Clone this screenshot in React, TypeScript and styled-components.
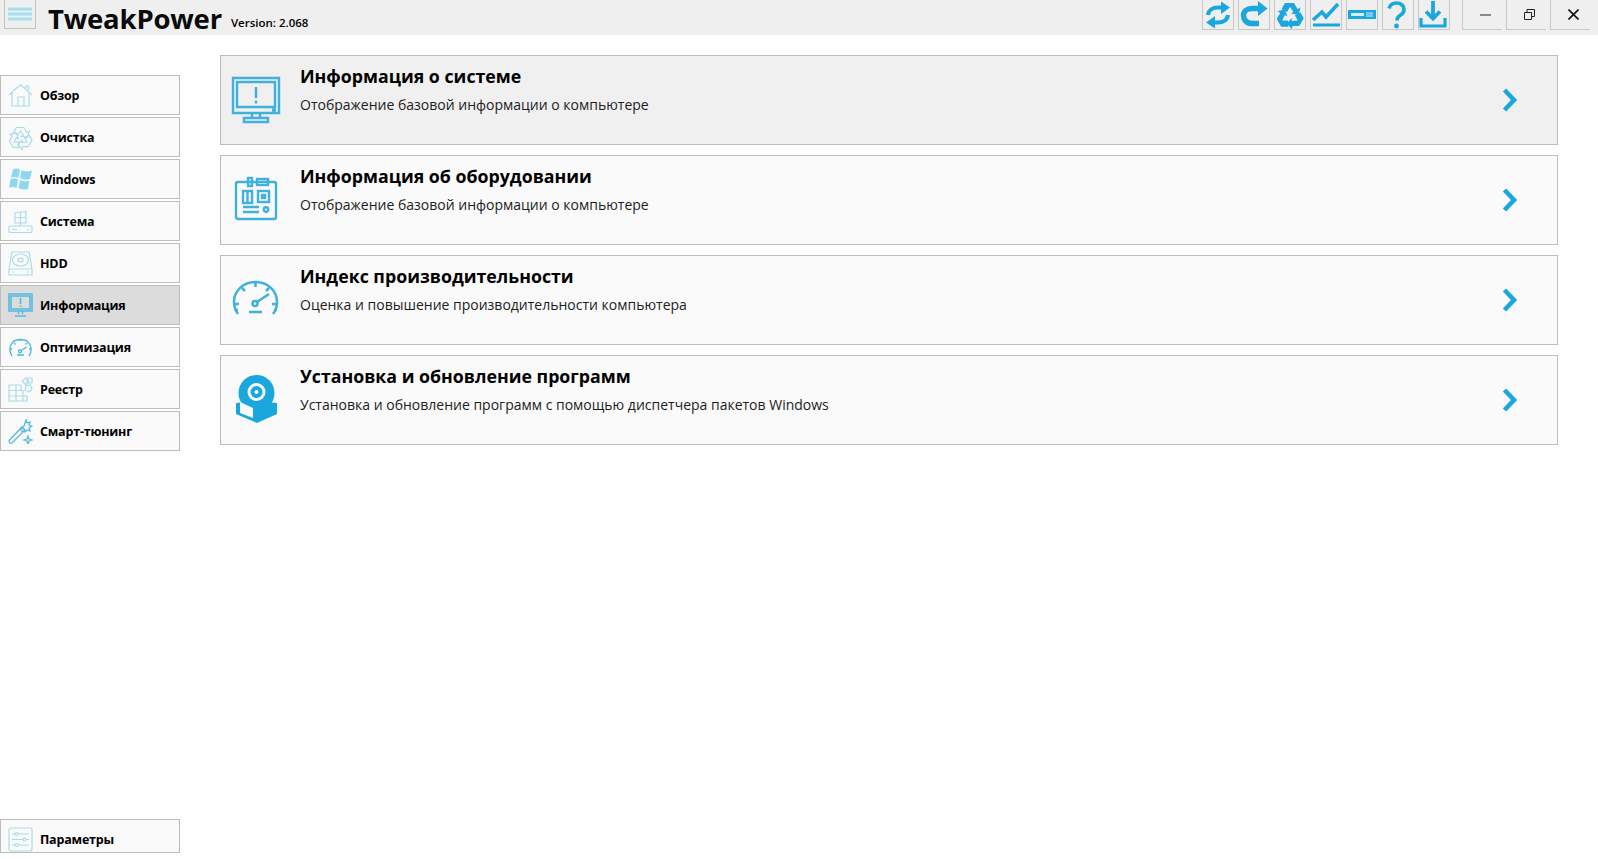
import * as React from 'react';
import styled, { createGlobalStyle } from 'styled-components';

const GlobalStyle = createGlobalStyle`
  html, body {
    margin: 0;
    padding: 0;
    background: #ffffff;
    font-family: 'Open Sans', 'Noto Sans', sans-serif;
    color: #000;
    overflow: hidden;
  }
  * { box-sizing: border-box; }
`;

const Page = styled.div`
  width: 1598px;
  height: 859px;
  display: flex;
  flex-direction: column;
`;

const Header = styled.header`
  height: 35px;
  flex-shrink: 0;
  background: #efefef;
  display: flex;
  align-items: flex-start;
  padding-left: 4px;
`;

const MenuButton = styled.div`
  width: 32px;
  height: 29px;
  border: 1px solid #c4c4c4;
  border-top: none;
  display: flex;
  align-items: center;
  justify-content: center;
`;

const AppTitle = styled.div`
  margin-left: 12px;
  font-size: 27.5px;
  line-height: 38px;
  font-weight: 700;
  letter-spacing: -0.2px;
  color: #0a0a0a;
`;

const Version = styled.div`
  margin-left: 9px;
  margin-top: 14px;
  font-size: 11.5px;
  line-height: 17px;
  font-weight: 600;
`;

const HeaderSpacer = styled.div`
  flex: 1;
`;

const ToolGroup = styled.div`
  display: flex;
  gap: 4px;
  margin-right: 12px;
`;

const ToolButton = styled.div`
  width: 32px;
  height: 30px;
  border: 1px solid #c8c8c8;
  border-top: none;
  display: flex;
  align-items: center;
  justify-content: center;
  color: #1aa7de;
`;

const WindowGroup = styled.div`
  display: flex;
  gap: 4px;
  margin-right: 8px;
`;

const WindowButton = styled.div`
  width: 40px;
  height: 30px;
  padding-left: 5px;
  border: 1px solid #c8c8c8;
  border-top: none;
  border-right: none;
  display: flex;
  align-items: center;
  justify-content: center;
`;

const Body = styled.div`
  flex: 1;
  display: flex;
  min-height: 0;
`;

const Sidebar = styled.nav`
  width: 180px;
  flex-shrink: 0;
  padding: 40px 0 6px;
  display: flex;
  flex-direction: column;
  justify-content: space-between;
`;

const NavList = styled.div`
  display: flex;
  flex-direction: column;
  gap: 2px;
`;

const NavItem = styled.div<{ $active?: boolean; $short?: boolean }>`
  height: ${(p) => (p.$short ? 34 : 40)}px;
  padding-top: ${(p) => (p.$short ? 6 : 0)}px;
  border: 1px solid #bdbdbd;
  background: ${(p) => (p.$active ? '#dcdcdc' : '#fafafa')};
  display: flex;
  align-items: center;
  padding-left: 7px;
  gap: 7px;
  font-size: 12.5px;
  font-weight: 700;
  letter-spacing: -0.2px;
`;

const NavIconBox = styled.div<{ $active?: boolean }>`
  width: 25px;
  height: 25px;
  color: ${(p) => (p.$active ? '#4fb8dd' : '#a9dcec')};
  display: flex;
  svg { width: 25px; height: 25px; display: block; }
`;

const Main = styled.main`
  flex: 1;
  padding: 20px 40px 0;
  display: flex;
  flex-direction: column;
  gap: 10px;
`;

const Card = styled.div<{ $active?: boolean }>`
  height: 90px;
  border: 1px solid #bdbdbd;
  background: ${(p) => (p.$active ? '#f0f0f0' : '#fafafa')};
  display: flex;
  align-items: flex-start;
`;

const CardIcon = styled.div`
  width: 50px;
  height: 50px;
  margin: 19px 0 0 10px;
  color: #3fb1dc;
  flex-shrink: 0;
  svg { width: 50px; height: 50px; display: block; }
`;

const CardText = styled.div`
  flex: 1;
  padding: 8px 0 0 19px;
`;

const CardTitle = styled.div`
  font-size: 17.75px;
  line-height: 24px;
  font-weight: 700;
`;

const CardDesc = styled.div`
  font-size: 14px;
  line-height: 20px;
  margin-top: 7px;
  color: #1c1c1c;
`;

const Chevron = styled.div`
  width: 20px;
  margin: 32px 35px 0 0;
  color: #1aa7de;
  svg { display: block; }
`;

// one bent arrow of the recycle sign, turned three times round the centre
const recycleArm = 'M10 3H19L22.500 9 25.500 7.500 23.500 15 16 13.500 18.500 12 15 7 12 12 6.500 9z';

const toolIcons: React.ReactNode[] = [
  <svg key="sync" width="30" height="30" viewBox="0 0 30 30">
    <path d="M5 15c.5-5 5-7.500 10-7.500h4" fill="none" stroke="currentColor" strokeWidth="4" />
    <path d="M18 1.500L27 7.500 18 14z" fill="currentColor" />
    <path d="M25 15c-.5 5-5 7.500-10 7.500h-4" fill="none" stroke="currentColor" strokeWidth="4" />
    <path d="M12 16L3 22.500 12 28.500z" fill="currentColor" />
  </svg>,
  <svg key="redo" width="30" height="30" viewBox="0 0 30 30">
    <path d="M20 8.500h-7C7.500 8.500 4.500 11.500 4.500 15.500S7.500 23.500 13 23.500h7" fill="none" stroke="currentColor" strokeWidth="5.500" />
    <path d="M19 1L28.500 8.500 19 16z" fill="currentColor" />
  </svg>,
  <svg key="recycle" width="30" height="30" viewBox="0 0 30 30" fill="currentColor">
    <path d={recycleArm} />
    <path d={recycleArm} transform="rotate(120 15 16)" />
    <path d={recycleArm} transform="rotate(240 15 16)" />
  </svg>,
  <svg key="chart" width="30" height="30" viewBox="0 0 30 30">
    <path d="M2 20l9-8 4 5L27 4" fill="none" stroke="currentColor" strokeWidth="3.600" />
    <path d="M2 25h27" stroke="currentColor" strokeWidth="3" />
  </svg>,
  <svg key="ram" width="30" height="30" viewBox="0 0 30 30">
    <rect x="1" y="10" width="28" height="9" fill="currentColor" />
    <rect x="4" y="13" width="13" height="3" fill="#d8eef7" />
    <rect x="19" y="12" width="7" height="5" fill="#7cc8e8" />
  </svg>,
  <svg key="help" width="30" height="30" viewBox="0 0 30 30">
    <path d="M6 8.500C7 5 10 3 13.500 3 18 3 21 6 21 9.500c0 3-1.500 4.500-4 6-2 1.200-3 2.500-3 5" fill="none" stroke="currentColor" strokeWidth="3.600" />
    <circle cx="13.500" cy="26" r="2.400" fill="currentColor" />
  </svg>,
  <svg key="download" width="30" height="30" viewBox="0 0 30 30">
    <path d="M14 1v17M7 11.500l7 7 7-7" fill="none" stroke="currentColor" strokeWidth="3.800" />
    <path d="M2 18v8h24v-8" fill="none" stroke="currentColor" strokeWidth="3.200" />
  </svg>,
];

const navIcons: Record<string, React.ReactNode> = {
  home: (
    <svg viewBox="0 0 25 25" fill="none" stroke="currentColor" strokeWidth="1.200">
      <path d="M1 12L12.500 1.500 24 12M4 10v13h17V10M10 23v-9h6v9M18 5V3h2.500v4.500" />
    </svg>
  ),
  recycle: (
    <svg viewBox="0 0 30 30" fill="none" stroke="currentColor" strokeWidth="1.400">
      <path d={recycleArm} />
      <path d={recycleArm} transform="rotate(120 15 16)" />
      <path d={recycleArm} transform="rotate(240 15 16)" />
    </svg>
  ),
  windows: (
    <svg viewBox="0 0 25 25" fill="#8fd6f0">
      <path d="M5 2.500c2-1.500 5-1.500 7 0l-1.500 8.500c-3-1.300-5-1.300-7.500-.2zM13.500 3c3 1.700 6 2 10.500.5l-2 8.500c-3 1-6 .7-10-.7zM2.500 12c3-1 5-1 7.500.2L8.500 21c-3-1.300-5-1.300-7.500-.2zM12 13c3 1.500 6 1.700 9.500.7L20 22c-3 1-6 .7-9.500-.7z" />
    </svg>
  ),
  system: (
    <svg viewBox="0 0 25 25" fill="none" stroke="currentColor" strokeWidth="1.200">
      <path d="M7 4l11-1.500V14H7zM7 8.500h11M12.500 3v14" />
      <rect x="1" y="17" width="23" height="6.500" rx="1" />
      <path d="M4 20.500h5M19 20.500h2" />
    </svg>
  ),
  hdd: (
    <svg viewBox="0 0 25 25" fill="none" stroke="currentColor" strokeWidth="1.200">
      <path d="M4 1h17l3 17v6H1v-6zM1 18h23M4 21h2M19 21h2" />
      <ellipse cx="12.500" cy="9" rx="8" ry="6" />
      <ellipse cx="12.500" cy="9" rx="2.500" ry="1.800" />
    </svg>
  ),
  info: (
    <svg viewBox="0 0 25 25" fill="none" stroke="currentColor" strokeWidth="1.500">
      <path d="M1 1h23v17H1zM3 3h19v13H3zM12.500 5v6M12.500 12.500v1.500M10.500 18v3M14.500 18v3M7 23h11" />
    </svg>
  ),
  speed: (
    <svg viewBox="0 0 25 25" fill="none" stroke="currentColor" strokeWidth="1.300">
      <path d="M4 21C1 17 1 11 4.500 7.500 8 3.500 17 3.500 20.500 7.500 24 11 24 17 21 21M12.500 4v2M6 8l1.500 1.500M19 8l-1.500 1.500M2 14h2M21 14h2M12.500 16l6-4M9 20h7" />
      <circle cx="12" cy="16.500" r="1.500" />
    </svg>
  ),
  registry: (
    <svg viewBox="0 0 25 25" fill="none" stroke="currentColor" strokeWidth="1.200">
      <path d="M1 8h7v16H1zM1 13.500h14M1 19h18M8 13.500h7V24H8zM15 19h4v5h-4zM8 8h5v5.500" />
      <path d="M14 4l4-3 3 3-3 4zM19 1h5v5h-5zM18 9l4-1 2 4-3 3-4-2z" />
    </svg>
  ),
  wand: (
    <svg viewBox="0 0 25 25" fill="none" stroke="#57b9dc" strokeWidth="1.300">
      <path d="M1.500 21L14 8l3 3L4 24c-2 1-3.500-1-2.500-3zM12 10l3 3" />
      <path d="M18 1l1 3 3-1-1 3 3 1-3 2 1 3-3-1-2 2-1-3-3-1 3-2zM20 17l1 3 3 1-3 1-1 3-1-3-3-1 3-1z" />
    </svg>
  ),
  settings: (
    <svg viewBox="0 0 25 25" fill="none" stroke="currentColor" strokeWidth="1.200">
      <rect x="1" y="1" width="23" height="23" rx="2" />
      <path d="M4 7h3M10 7h11M4 12.500h11M18 12.500h3M4 18h3M10 18h11" />
      <circle cx="8.500" cy="7" r="1.500" />
      <circle cx="16.500" cy="12.500" r="1.500" />
      <circle cx="8.500" cy="18" r="1.500" />
    </svg>
  ),
};

const cardIcons: Record<string, React.ReactNode> = {
  monitor: (
    <svg viewBox="0 0 50 50" fill="none" stroke="currentColor" strokeWidth="2.400">
      <path d="M2 3h46v35H2zM6 7h38v25H6zM25 12v11M25 25.500v3M21 38v5M29 38v5M13 43h24v4H13z" />
      <circle cx="43" cy="35" r="1" fill="currentColor" />
    </svg>
  ),
  board: (
    <svg viewBox="0 0 50 50" fill="none" stroke="currentColor" strokeWidth="2.400">
      <path d="M7 7h36a2 2 0 0 1 2 2v33a2 2 0 0 1-2 2H7a2 2 0 0 1-2-2V9a2 2 0 0 1 2-2z" />
      <rect x="17" y="3" width="4" height="8" />
      <rect x="26" y="4" width="11" height="6" />
      <rect x="12" y="16" width="9" height="12" />
      <rect x="27" y="16" width="11" height="11" />
      <rect x="31" y="20" width="3" height="3" />
      <path d="M16.500 16v12M12 32h16M12 37h16" />
      <circle cx="35" cy="34.500" r="2.200" />
    </svg>
  ),
  gauge: (
    <svg viewBox="0 0 50 50" fill="none" stroke="currentColor" strokeWidth="2.500">
      <path d="M7 39C4 35 3 31 3 27 3 16 12 7 24.500 7S46 16 46 27c0 4-1 8-4 12M24.500 7v5M11 13l3 3M38 13l-3 3M3 29h5M41 29h5M4 35h3M43 35h3M26 27l12-8M18 37h13" />
      <circle cx="24" cy="28.500" r="2.500" />
    </svg>
  ),
  box: (
    <svg viewBox="0 0 50 50">
      <circle cx="25.500" cy="18" r="18" fill="#1aa7de" />
      <circle cx="25.500" cy="17" r="9" fill="#fafafa" />
      <circle cx="25.500" cy="17" r="6" fill="#1aa7de" />
      <circle cx="25.500" cy="17" r="2" fill="#fafafa" />
      <path d="M5 28L25 26 46 28v11L26 48 5 39z" fill="#1aa7de" />
      <path d="M9 27l13 6v10L9 38z" fill="#fafafa" />
    </svg>
  ),
};

const navItems = [
  { label: 'Обзор', icon: 'home' },
  { label: 'Очистка', icon: 'recycle' },
  { label: 'Windows', icon: 'windows' },
  { label: 'Система', icon: 'system' },
  { label: 'HDD', icon: 'hdd' },
  { label: 'Информация', icon: 'info', active: true },
  { label: 'Оптимизация', icon: 'speed', strong: true },
  { label: 'Реестр', icon: 'registry' },
  { label: 'Смарт-тюнинг', icon: 'wand' },
];

const cards = [
  { title: 'Информация о системе', desc: 'Отображение базовой информации о компьютере', icon: 'monitor', active: true },
  { title: 'Информация об оборудовании', desc: 'Отображение базовой информации о компьютере', icon: 'board' },
  { title: 'Индекс производительности', desc: 'Оценка и повышение производительности компьютера', icon: 'gauge' },
  { title: 'Установка и обновление программ', desc: 'Установка и обновление программ с помощью диспетчера пакетов Windows', icon: 'box' },
];

export default function App() {
  return (
    <Page>
      <GlobalStyle />
      <Header>
        <MenuButton>
          <svg width="24" height="14" viewBox="0 0 24 14">
            <path d="M0 2h24M0 7h24M0 12h24" stroke="#a5def1" strokeWidth="3" />
          </svg>
        </MenuButton>
        <AppTitle>TweakPower</AppTitle>
        <Version>Version: 2.068</Version>
        <HeaderSpacer />
        <ToolGroup>
          {toolIcons.map((icon, i) => (
            <ToolButton key={i}>{icon}</ToolButton>
          ))}
        </ToolGroup>
        <WindowGroup>
          <WindowButton>
            <svg width="11" height="2" viewBox="0 0 11 2">
              <path d="M0 1h11" stroke="#222" strokeWidth="1" />
            </svg>
          </WindowButton>
          <WindowButton>
            <svg width="11" height="11" viewBox="0 0 11 11" fill="none" stroke="#222">
              <path d="M.5 3.500h7v7h-7zM3 3.500V.500h7.500v7H7.500" />
            </svg>
          </WindowButton>
          <WindowButton>
            <svg width="11" height="11" viewBox="0 0 11 11" fill="none" stroke="#111" strokeWidth="1.600">
              <path d="M.5.500l10 10M10.500.500l-10 10" />
            </svg>
          </WindowButton>
        </WindowGroup>
      </Header>
      <Body>
        <Sidebar>
          <NavList>
            {navItems.map((item) => (
              <NavItem key={item.label} $active={item.active}>
                <NavIconBox $active={item.active || item.strong}>{navIcons[item.icon]}</NavIconBox>
                {item.label}
              </NavItem>
            ))}
          </NavList>
          <NavItem $short>
            <NavIconBox>{navIcons.settings}</NavIconBox>
            Параметры
          </NavItem>
        </Sidebar>
        <Main>
          {cards.map((card) => (
            <Card key={card.title} $active={card.active}>
              <CardIcon>{cardIcons[card.icon]}</CardIcon>
              <CardText>
                <CardTitle>{card.title}</CardTitle>
                <CardDesc>{card.desc}</CardDesc>
              </CardText>
              <Chevron>
                <svg width="16" height="24" viewBox="0 0 16 24" fill="none" stroke="currentColor" strokeWidth="4.600">
                  <path d="M2.500 2l9.500 10-9.500 10" />
                </svg>
              </Chevron>
            </Card>
          ))}
        </Main>
      </Body>
    </Page>
  );
}
